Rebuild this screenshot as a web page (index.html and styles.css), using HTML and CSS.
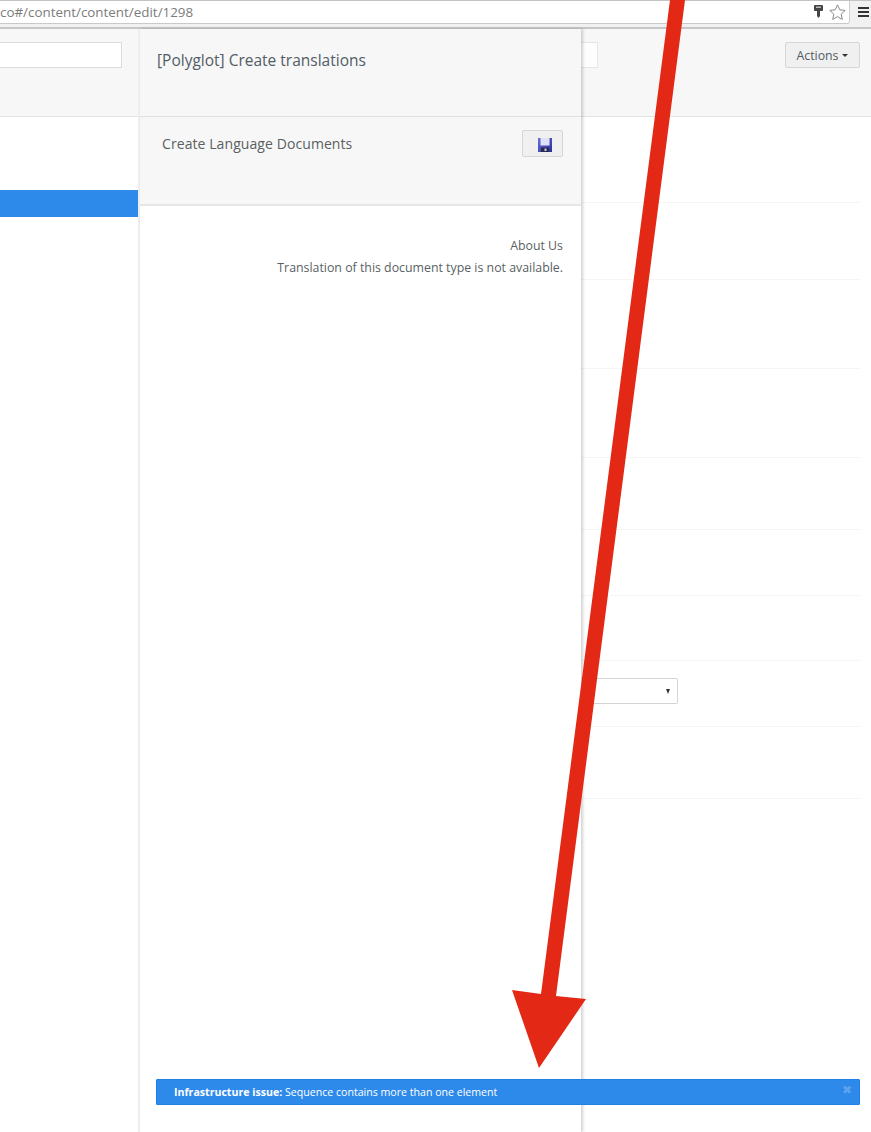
FILE: index.html
```html
<!DOCTYPE html>
<html lang="en">
<head>
<meta charset="utf-8">
<title>Create translations</title>
<link rel="stylesheet" href="styles.css">
</head>
<body>
<div class="page">
  <header class="chrome">
    <div class="url-field">
      <span class="url-text">co#/content/content/edit/1298</span>
      <svg class="key-icon" width="9" height="13" viewBox="0 0 9 13"><path d="M1 0h7a1 1 0 0 1 1 1v4a1 1 0 0 1-1 1H6v5l-1.500 2L3 11V6H1a1 1 0 0 1-1-1V1a1 1 0 0 1 1-1z" fill="#444"/><path d="M2 1.500h5V3H2z" fill="#bbb"/></svg>
      <svg class="star-icon" width="17" height="16" viewBox="0 0 17 16"><path d="M8.500.8l2.300 5 5.400.6-4 3.700 1.100 5.300-4.800-2.700-4.800 2.700 1.100-5.300-4-3.700 5.400-.6z" fill="#fff" stroke="#8a8a8a"/></svg>
    </div>
    <div class="menu-icon"><i></i><i></i><i></i></div>
  </header>
  <div class="app">
    <aside class="tree">
      <div class="tree-head"><div class="search"></div></div>
      <div class="tree-body"><div class="tree-selected"></div></div>
    </aside>
    <section class="dialog">
      <div class="dialog-head"><h1>[Polyglot] Create translations</h1></div>
      <div class="dialog-sub">
        <span class="sub-title">Create Language Documents</span>
        <button class="save-btn" type="button" aria-label="Save">
          <svg width="14" height="14" viewBox="0 0 14 14"><defs><linearGradient id="disk" x1="0" y1="0" x2="1" y2="1"><stop offset="0" stop-color="#6a6fe0"/><stop offset="1" stop-color="#2a2e9c"/></linearGradient></defs><rect width="14" height="14" fill="url(#disk)"/><rect x="2.500" y="0" width="9" height="7.500" fill="#dfe1f7"/><rect x="3" y="9.500" width="8" height="4.500" fill="#2a2a4a"/><rect x="6.500" y="10.500" width="2" height="2.500" fill="#c9cce8"/></svg>
        </button>
      </div>
      <div class="dialog-body">
        <p class="doc-name">About Us</p>
        <p class="doc-note">Translation of this document type is not available.</p>
      </div>
    </section>
    <main class="main">
      <div class="main-head">
        <div class="name-input"></div>
        <button class="actions-btn" type="button">Actions<span class="caret"></span></button>
      </div>
      <div class="rows">
        <div class="row r1"></div>
        <div class="row r2"></div>
        <div class="row r3"></div>
        <div class="row r3"></div>
        <div class="row r4"></div>
        <div class="row r5"></div>
        <div class="row r6"></div>
        <div class="row r7"><div class="select"><span class="select-arrow"></span></div></div>
        <div class="row r4"></div>
      </div>
    </main>
  </div>
  <div class="notice">
    <span class="notice-text"><strong>Infrastructure issue:</strong> Sequence contains more than one element</span>
    <span class="notice-close">&#10006;</span>
  </div>
  <svg class="arrow" width="871" height="1132" viewBox="0 0 871 1132"><path d="M670 0H685L556 996 586 999 539 1068 512 990 541 994Z" fill="#e32815"/></svg>
</div>
</body>
</html>
```

FILE: styles.css
```css
* { box-sizing: border-box; }
html, body { margin: 0; padding: 0; background: #fff; }
body { font-family: "Open Sans", "Noto Sans", sans-serif; color: #515c66; }

.page { position: relative; width: 871px; height: 1132px; overflow: hidden; display: flex; flex-direction: column; }

.chrome { flex: 0 0 29px; height: 29px; display: flex; background: #f1f1f1; border-top: 1px solid #c4c4c4; border-bottom: 2px solid #c6c6c6; }
.url-field { width: 850px; height: 23px; display: flex; align-items: center; background: #fff; border-right: 1px solid #cfcfcf; border-bottom: 1px solid #c9c9c9; border-radius: 0 0 3px 0; }
.url-text { flex: 1; margin-top: -1px; font-size: 13.4px; color: #7c7c7c; white-space: nowrap; }
.key-icon { margin-right: 6px; margin-top: -2px; }
.star-icon { margin-right: 3px; margin-top: -1px; }
.menu-icon { display: flex; flex-direction: column; gap: 2px; margin: 6px 0 0 8px; }
.menu-icon i { display: block; width: 11px; height: 2px; background: #333; }

.app { flex: 1; display: flex; min-height: 0; }

.tree { flex: 0 0 139px; display: flex; flex-direction: column; }
.tree-head { height: 88px; padding-top: 13px; background: #f7f7f7; border-bottom: 1px solid #e3e3e3; }
.search { width: 122px; height: 26px; background: #fff; border: 1px solid #dcdcdc; border-left: 0; }
.tree-body { padding-top: 73px; }
.tree-selected { height: 27px; background: #2e8aea; }

.dialog { position: relative; z-index: 2; flex: 0 0 442px; display: flex; flex-direction: column; background: #fff; border-left: 1px solid #ececec; box-shadow: -1px 0 0 #efefef, 2px 0 3px rgba(0, 0, 0, .18); }
.dialog-head { height: 88px; padding: 19px 0 0 17px; background: #f7f7f7; border-bottom: 1px solid #e0e0e0; }
.dialog-head h1 { margin: 0; font-size: 15.5px; line-height: 24px; font-weight: 400; color: #515c66; }
.dialog-sub { height: 89px; display: flex; justify-content: space-between; align-items: flex-start; padding: 13px 18px 0 22px; background: #f7f7f7; border-bottom: 2px solid #e6e6e6; }
.sub-title { padding-top: 4px; font-size: 14px; letter-spacing: .08px; line-height: 20px; color: #5a5f63; }
.save-btn { width: 41px; height: 27px; padding: 3px 0 0 4px; display: flex; align-items: center; justify-content: center; background: #f0f0f0; border: 1px solid #d6d6d6; border-radius: 2px; }
.dialog-body { flex: 1; padding: 29px 18px 0 0; text-align: right; font-size: 12.35px; line-height: 22px; color: #5a5f63; }
.doc-name, .doc-note { margin: 0; }

.main { flex: 1; min-width: 0; display: flex; flex-direction: column; }
.main-head { height: 88px; display: flex; justify-content: space-between; align-items: flex-start; padding: 13px 11px 0 0; background: #f7f7f7; border-bottom: 1px solid #e3e3e3; }
.name-input { width: 17px; height: 26px; background: #fdfdfd; border: 1px solid #e6e6e6; border-left: 0; }
.actions-btn { width: 75px; height: 26px; padding: 0; display: flex; align-items: center; justify-content: center; font-family: inherit; font-size: 12.3px; color: #515c66; background: #f0f0f0; border: 1px solid #d6d6d6; border-radius: 2px; }
.caret { display: inline-block; margin-left: 4px; border-top: 3px solid #333; border-left: 3px solid transparent; border-right: 3px solid transparent; }

.rows { padding-right: 11px; }
.row { border-bottom: 1px solid #f5f5f5; }
.r1 { height: 86px; }
.r2 { height: 77px; }
.r3 { height: 89px; }
.r4 { height: 72px; }
.r5 { height: 66px; }
.r6 { height: 65px; }
.r7 { height: 66px; padding-top: 17px; }
.select { position: relative; width: 97px; height: 26px; background: #fff; border: 1px solid #d4d4d4; border-left: 0; border-radius: 0 2px 2px 0; }
.select-arrow { position: absolute; right: 7px; top: 10px; border-top: 5px solid #333; border-left: 2.500px solid transparent; border-right: 2.500px solid transparent; }

.notice { position: absolute; z-index: 3; left: 156px; top: 1079px; width: 704px; height: 26px; display: flex; align-items: center; justify-content: space-between; padding: 0 7px 0 17px; background: #2e8aea; border: 1px solid #1f80e8; border-radius: 1px; font-size: 10.6px; color: #fff; }
.notice-text { margin-top: -1px; white-space: nowrap; }
.notice-close { margin-top: -4px; font-size: 12px; line-height: 14px; color: #5ea3ee; }

.arrow { position: absolute; z-index: 4; left: 0; top: 0; }
```
